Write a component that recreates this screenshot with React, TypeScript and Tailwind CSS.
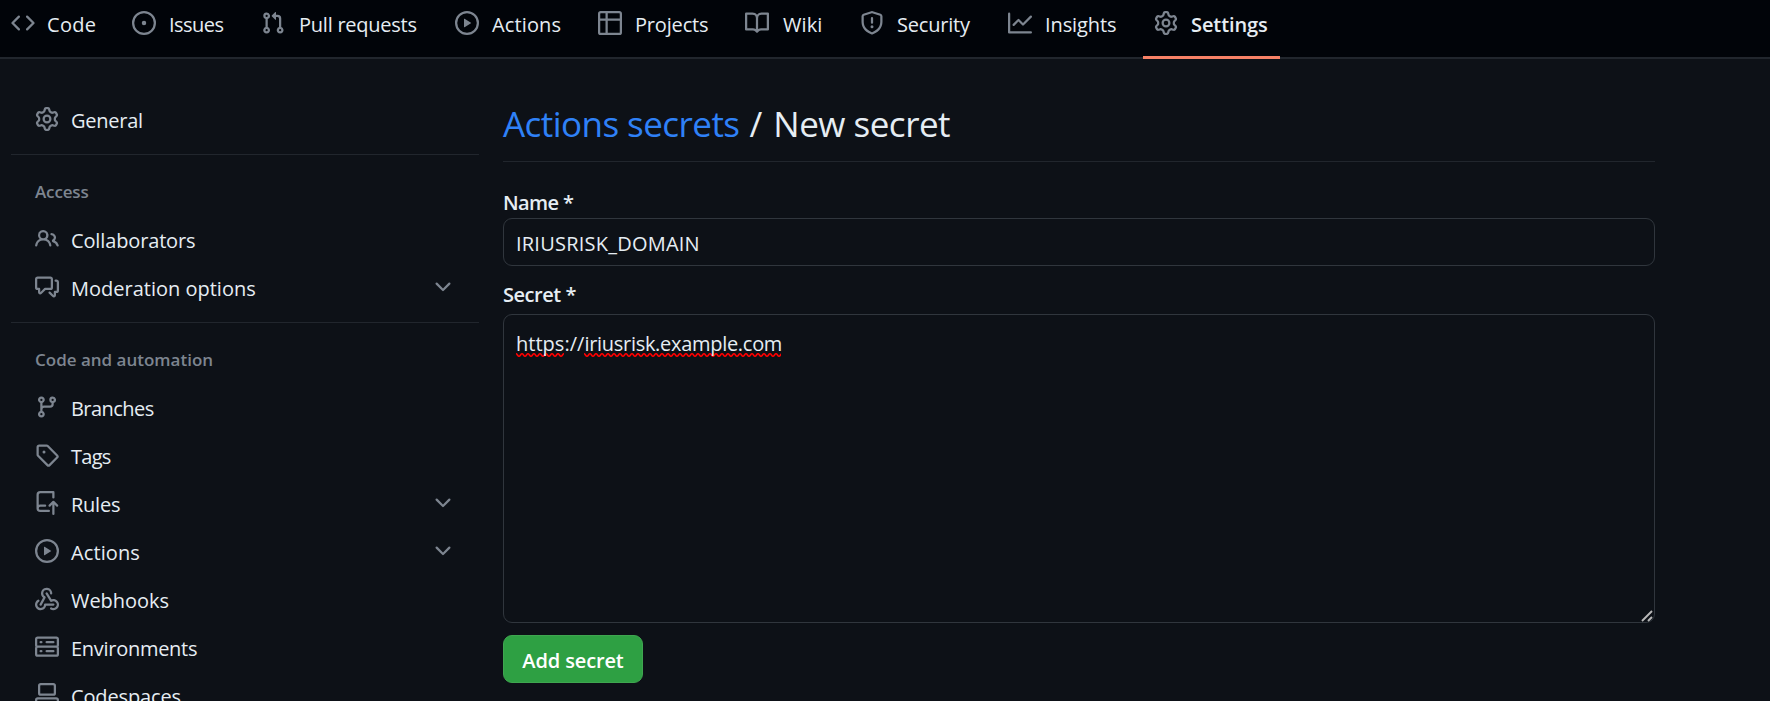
import React from "react";

const icons = {
  code: "m11.28 3.22 4.25 4.25a.75.75 0 0 1 0 1.06l-4.25 4.25a.749.749 0 0 1-1.275-.326.749.749 0 0 1 .215-.734L13.94 8l-3.72-3.72a.749.749 0 0 1 .326-1.275.749.749 0 0 1 .734.215Zm-6.56 0a.751.751 0 0 1 1.042.018.751.751 0 0 1 .018 1.042L2.06 8l3.72 3.72a.749.749 0 0 1-.326 1.275.749.749 0 0 1-.734-.215L.47 8.53a.75.75 0 0 1 0-1.06Z",
  issue: "M8 9.5a1.5 1.5 0 1 0 0-3 1.5 1.5 0 0 0 0 3Z M8 0a8 8 0 1 1 0 16A8 8 0 0 1 8 0ZM1.5 8a6.5 6.5 0 1 0 13 0 6.5 6.5 0 0 0-13 0Z",
  pull: "M1.5 3.25a2.25 2.25 0 1 1 3 2.122v5.256a2.251 2.251 0 1 1-1.5 0V5.372A2.25 2.25 0 0 1 1.5 3.25Zm5.677-.177L9.573.677A.25.25 0 0 1 10 .854V2.5h1A2.5 2.5 0 0 1 13.5 5v5.628a2.251 2.251 0 1 1-1.5 0V5a1 1 0 0 0-1-1h-1v1.646a.25.25 0 0 1-.427.177L7.177 3.427a.25.25 0 0 1 0-.354ZM3.75 2.5a.75.75 0 1 0 0 1.5.75.75 0 0 0 0-1.5Zm0 9.5a.75.75 0 1 0 0 1.5.75.75 0 0 0 0-1.5Zm8.25.75a.75.75 0 1 0 1.5 0 .75.75 0 0 0-1.5 0Z",
  play: "M8 0a8 8 0 1 1 0 16A8 8 0 0 1 8 0ZM1.5 8a6.5 6.5 0 1 0 13 0 6.5 6.5 0 0 0-13 0Zm4.879-2.773 4.264 2.559a.25.25 0 0 1 0 .428l-4.264 2.559A.25.25 0 0 1 6 10.559V5.442a.25.25 0 0 1 .379-.215Z",
  table: "M0 1.75C0 .784.784 0 1.75 0h12.5C15.216 0 16 .784 16 1.75v12.5A1.75 1.75 0 0 1 14.25 16H1.75A1.75 1.75 0 0 1 0 14.25ZM6.5 6.5v8h7.75a.25.25 0 0 0 .25-.25V6.5Zm8-1.5V1.75a.25.25 0 0 0-.25-.25H6.5V5Zm-13 1.5v7.75c0 .138.112.25.25.25H5v-8ZM5 5V1.5H1.75a.25.25 0 0 0-.25.25V5Z",
  book: "M0 1.75A.75.75 0 0 1 .75 1h4.253c1.227 0 2.317.59 3 1.501A3.743 3.743 0 0 1 11.006 1h4.245a.75.75 0 0 1 .75.75v10.5a.75.75 0 0 1-.75.75h-4.507a2.25 2.25 0 0 0-1.591.659l-.622.621a.75.75 0 0 1-1.06 0l-.622-.621A2.25 2.25 0 0 0 5.258 13H.75a.75.75 0 0 1-.75-.75Zm7.251 10.324.004-5.073-.002-2.253A2.25 2.25 0 0 0 5.003 2.5H1.5v9h3.757a3.75 3.75 0 0 1 1.994.574ZM8.755 4.75l-.004 7.322a3.752 3.752 0 0 1 1.992-.572H14.5v-9h-3.495a2.25 2.25 0 0 0-2.25 2.25Z",
  shield: "M7.467.133a1.748 1.748 0 0 1 1.066 0l5.25 1.68A1.75 1.75 0 0 1 15 3.48V7c0 1.566-.32 3.182-1.303 4.682-.983 1.498-2.585 2.813-5.032 3.855a1.697 1.697 0 0 1-1.33 0c-2.447-1.042-4.049-2.357-5.032-3.855C1.32 10.182 1 8.566 1 7V3.48a1.75 1.75 0 0 1 1.217-1.667Zm.61 1.429a.25.25 0 0 0-.153 0l-5.25 1.68a.25.25 0 0 0-.174.238V7c0 1.358.275 2.666 1.057 3.86.784 1.194 2.121 2.34 4.366 3.297a.196.196 0 0 0 .154 0c2.245-.956 3.582-2.104 4.366-3.298C13.225 9.666 13.5 8.36 13.5 7V3.48a.251.251 0 0 0-.174-.237l-5.25-1.68ZM8.75 4.75v3a.75.75 0 0 1-1.5 0v-3a.75.75 0 0 1 1.5 0ZM9 10.5a1 1 0 1 1-2 0 1 1 0 0 1 2 0Z",
  graph: "M1.5 1.75V13.5h13.75a.75.75 0 0 1 0 1.5H.75a.75.75 0 0 1-.75-.75V1.75a.75.75 0 0 1 1.5 0Zm14.28 2.53-5.25 5.25a.75.75 0 0 1-1.06 0L7 7.06 4.28 9.78a.751.751 0 0 1-1.042-.018.751.751 0 0 1-.018-1.042l3.25-3.25a.75.75 0 0 1 1.06 0L10 7.94l4.72-4.72a.751.751 0 0 1 1.042.018.751.751 0 0 1 .018 1.042Z",
  gear: "M8 0a8.2 8.2 0 0 1 .701.031C9.444.095 9.99.645 10.16 1.29l.288 1.107c.018.066.079.158.212.224.231.114.454.243.668.386.123.082.233.09.299.071l1.103-.303c.644-.176 1.392.021 1.82.63.27.385.506.792.704 1.218.315.675.111 1.422-.364 1.891l-.814.806c-.049.048-.098.147-.088.294.016.257.016.515 0 .772-.01.147.038.246.088.294l.814.806c.475.469.679 1.216.364 1.891a7.977 7.977 0 0 1-.704 1.217c-.428.61-1.176.807-1.82.63l-1.102-.302c-.067-.019-.177-.011-.3.071a5.909 5.909 0 0 1-.668.386c-.133.066-.194.158-.211.224l-.29 1.106c-.168.646-.715 1.196-1.458 1.26a8.006 8.006 0 0 1-1.402 0c-.743-.064-1.289-.614-1.458-1.26l-.289-1.106c-.018-.066-.079-.158-.212-.224a5.738 5.738 0 0 1-.668-.386c-.123-.082-.233-.09-.299-.071l-1.103.303c-.644.176-1.392-.021-1.82-.63a8.12 8.12 0 0 1-.704-1.218c-.315-.675-.111-1.422.363-1.891l.815-.806c.05-.048.098-.147.088-.294a6.214 6.214 0 0 1 0-.772c.01-.147-.038-.246-.088-.294l-.815-.806C.635 6.045.431 5.298.746 4.623a7.92 7.92 0 0 1 .704-1.217c.428-.61 1.176-.807 1.82-.63l1.102.302c.067.019.177.011.3-.071.214-.143.437-.272.668-.386.133-.066.194-.158.211-.224l.29-1.106C6.009.645 6.556.095 7.299.03 7.53.01 7.764 0 8 0Zm-.571 1.525c-.036.003-.108.036-.137.146l-.289 1.105c-.147.561-.549.967-.998 1.189-.173.086-.34.183-.5.29-.417.278-.97.423-1.529.27l-1.103-.303c-.109-.03-.175.016-.195.045-.22.312-.412.644-.573.99-.014.031-.021.11.059.19l.815.806c.411.406.562.957.53 1.456a4.709 4.709 0 0 0 0 .582c.032.499-.119 1.05-.53 1.456l-.815.806c-.081.08-.073.159-.059.19.162.346.353.677.573.989.02.03.085.076.195.046l1.102-.303c.56-.153 1.113-.008 1.53.27.161.107.328.204.501.29.447.222.85.629.997 1.189l.289 1.105c.029.109.101.143.137.146a6.6 6.6 0 0 0 1.142 0c.036-.003.108-.036.137-.146l.289-1.105c.147-.561.549-.967.998-1.189.173-.086.34-.183.5-.29.417-.278.97-.423 1.529-.27l1.103.303c.109.029.175-.016.195-.045.22-.313.411-.644.573-.99.014-.031.021-.11-.059-.19l-.815-.806c-.411-.406-.562-.957-.53-1.456a4.709 4.709 0 0 0 0-.582c-.032-.499.119-1.05.53-1.456l.815-.806c.081-.08.073-.159.059-.19a6.464 6.464 0 0 0-.573-.989c-.02-.03-.085-.076-.195-.046l-1.102.303c-.56.153-1.113.008-1.53-.27a4.44 4.44 0 0 0-.501-.29c-.447-.222-.85-.629-.997-1.189l-.289-1.105c-.029-.11-.101-.143-.137-.146a6.6 6.6 0 0 0-1.142 0ZM11 8a3 3 0 1 1-6 0 3 3 0 0 1 6 0ZM9.5 8a1.5 1.5 0 1 0-3.001.001A1.5 1.5 0 0 0 9.5 8Z",
  people: "M2 5.5a3.5 3.5 0 1 1 5.898 2.549 5.508 5.508 0 0 1 3.034 4.084.75.75 0 1 1-1.482.235 4 4 0 0 0-7.9 0 .75.75 0 0 1-1.482-.236A5.507 5.507 0 0 1 3.102 8.05 3.493 3.493 0 0 1 2 5.5ZM11 4a3.001 3.001 0 0 1 2.22 5.018 5.01 5.01 0 0 1 2.56 3.012.749.749 0 0 1-.885.954.752.752 0 0 1-.549-.514 3.507 3.507 0 0 0-2.522-2.372.75.75 0 0 1-.574-.73v-.352a.75.75 0 0 1 .416-.672A1.5 1.5 0 0 0 11 5.5.75.75 0 0 1 11 4Zm-5.5-.5a2 2 0 1 0-.001 3.999A2 2 0 0 0 5.5 3.5Z",
  comments: "M1.75 1h8.5c.966 0 1.75.784 1.75 1.75v5.5A1.75 1.75 0 0 1 10.25 10H7.061l-2.574 2.573A1.458 1.458 0 0 1 2 11.543V10h-.25A1.75 1.75 0 0 1 0 8.25v-5.5C0 1.784.784 1 1.75 1ZM1.5 2.75v5.5c0 .138.112.25.25.25h1a.75.75 0 0 1 .75.75v2.19l2.72-2.72a.749.749 0 0 1 .53-.22h3.5a.25.25 0 0 0 .25-.25v-5.5a.25.25 0 0 0-.25-.25h-8.5a.25.25 0 0 0-.25.25Zm13 2a.25.25 0 0 0-.25-.25h-.5a.75.75 0 0 1 0-1.5h.5c.966 0 1.75.784 1.75 1.75v5.5A1.75 1.75 0 0 1 14.25 12H14v1.543a1.458 1.458 0 0 1-2.487 1.03L9.22 12.28a.749.749 0 0 1 .326-1.275.749.749 0 0 1 .734.215l2.22 2.22v-2.19a.75.75 0 0 1 .75-.75h1a.25.25 0 0 0 .25-.25Z",
  branch: "M9.5 3.25a2.25 2.25 0 1 1 3 2.122V6A2.5 2.5 0 0 1 10 8.5H6a1 1 0 0 0-1 1v1.128a2.251 2.251 0 1 1-1.5 0V5.372a2.25 2.25 0 1 1 1.5 0v1.836A2.493 2.493 0 0 1 6 7h4a1 1 0 0 0 1-1v-.628A2.25 2.25 0 0 1 9.5 3.25Zm-6 0a.75.75 0 1 0 1.5 0 .75.75 0 0 0-1.5 0Zm8.25-.75a.75.75 0 1 0 0 1.5.75.75 0 0 0 0-1.5ZM4.25 12a.75.75 0 1 0 0 1.5.75.75 0 0 0 0-1.5Z",
  tag: "M1 7.775V2.75C1 1.784 1.784 1 2.75 1h5.025c.464 0 .91.184 1.238.513l6.25 6.25a1.75 1.75 0 0 1 0 2.474l-5.026 5.026a1.75 1.75 0 0 1-2.474 0l-6.25-6.25A1.752 1.752 0 0 1 1 7.775Zm1.5 0c0 .066.026.13.073.177l6.25 6.25a.25.25 0 0 0 .354 0l5.025-5.025a.25.25 0 0 0 0-.354l-6.25-6.25a.25.25 0 0 0-.177-.073H2.75a.25.25 0 0 0-.25.25ZM6 5a1 1 0 1 1 0 2 1 1 0 0 1 0-2Z",
  push: "M1 2.5A2.5 2.5 0 0 1 3.5 0h8.75a.75.75 0 0 1 .75.75v3.5a.75.75 0 0 1-1.5 0V1.5h-8a1 1 0 0 0-1 1v6.708A2.493 2.493 0 0 1 3.5 9h3.25a.75.75 0 0 1 0 1.5H3.5a1 1 0 0 0 0 2h5.75a.75.75 0 0 1 0 1.5H3.5A2.5 2.5 0 0 1 1 11.5Zm13.23 7.79h-.001l-1.224-1.224v6.184a.75.75 0 0 1-1.5 0V9.066L10.28 10.29a.75.75 0 0 1-1.06-1.061l2.505-2.504a.75.75 0 0 1 1.06 0L15.29 9.23a.751.751 0 0 1-.018 1.042.751.751 0 0 1-1.042.018Z",
  webhook: "M5.5 4.25a2.25 2.25 0 0 1 4.5 0 .75.75 0 0 0 1.5 0 3.75 3.75 0 1 0-6.14 2.889l-2.272 4.258a.75.75 0 0 0 1.324.706L7 7.25a.75.75 0 0 0-.309-1.015A2.25 2.25 0 0 1 5.5 4.25Z M7.364 3.607a.75.75 0 0 1 1.03.257l2.608 4.349a3.75 3.75 0 1 1-.628 6.785.75.75 0 0 1 .752-1.299 2.25 2.25 0 1 0-.033-3.88.75.75 0 0 1-1.03-.256L7.107 4.636a.75.75 0 0 1 .257-1.03Z M2.9 8.776A.75.75 0 0 1 2.625 9.8 2.25 2.25 0 1 0 6 11.75a.75.75 0 0 1 .75-.751h5.5a.75.75 0 0 1 0 1.5H7.425a3.751 3.751 0 1 1-5.55-3.998.75.75 0 0 1 1.024.274Z",
  server: "M1.75 1h12.5c.966 0 1.75.784 1.75 1.75v4c0 .372-.116.717-.314 1 .198.283.314.628.314 1v4a1.75 1.75 0 0 1-1.75 1.75H1.75A1.75 1.75 0 0 1 0 12.75v-4c0-.358.109-.707.314-1a1.739 1.739 0 0 1-.314-1v-4C0 1.784.784 1 1.75 1ZM1.5 2.75v4c0 .138.112.25.25.25h12.5a.25.25 0 0 0 .25-.25v-4a.25.25 0 0 0-.25-.25H1.75a.25.25 0 0 0-.25.25Zm.25 5.75a.25.25 0 0 0-.25.25v4c0 .138.112.25.25.25h12.5a.25.25 0 0 0 .25-.25v-4a.25.25 0 0 0-.25-.25ZM7 4.75A.75.75 0 0 1 7.75 4h4.5a.75.75 0 0 1 0 1.5h-4.5A.75.75 0 0 1 7 4.75ZM7.75 10h4.5a.75.75 0 0 1 0 1.5h-4.5a.75.75 0 0 1 0-1.5ZM3 4.75A.75.75 0 0 1 3.75 4h.5a.75.75 0 0 1 0 1.5h-.5A.75.75 0 0 1 3 4.75ZM3.75 10h.5a.75.75 0 0 1 0 1.5h-.5a.75.75 0 0 1 0-1.5Z",
  codespaces: "M0 11.25c0-.966.784-1.75 1.75-1.75h12.5c.966 0 1.75.784 1.75 1.75v3A1.75 1.75 0 0 1 14.25 16H1.75A1.75 1.75 0 0 1 0 14.25Zm2-9.5C2 .784 2.784 0 3.75 0h8.5C13.216 0 14 .784 14 1.75v5a1.75 1.75 0 0 1-1.75 1.75h-8.5A1.75 1.75 0 0 1 2 6.75Zm1.75-.25a.25.25 0 0 0-.25.25v5c0 .138.112.25.25.25h8.5a.25.25 0 0 0 .25-.25v-5a.25.25 0 0 0-.25-.25Zm-2 9.5a.25.25 0 0 0-.25.25v3c0 .138.112.25.25.25h12.5a.25.25 0 0 0 .25-.25v-3a.25.25 0 0 0-.25-.25Z",
  chevron: "M12.78 5.22a.749.749 0 0 1 0 1.06l-4.25 4.25a.749.749 0 0 1-1.06 0L3.22 6.28a.749.749 0 1 1 1.06-1.06L8 8.939l3.72-3.719a.749.749 0 0 1 1.06 0Z",
};

type IconName = keyof typeof icons;

function Icon({ name }: { name: IconName }) {
  return (
    <svg viewBox="0 0 16 16" className="size-6 shrink-0 fill-[#7d8590]" aria-hidden="true">
      <path d={icons[name]} />
    </svg>
  );
}

type Item = { icon: IconName; label: string; text: string; expandable?: boolean };

const tabs: Item[] = [
  { icon: "code", label: "Code", text: "w-[49px] tracking-[0.3px]" },
  { icon: "issue", label: "Issues", text: "w-[57px] pl-px tracking-[-0.55px]" },
  { icon: "pull", label: "Pull requests", text: "w-[122px] pl-0.5 tracking-[-0.24px]" },
  { icon: "play", label: "Actions", text: "w-[71px] pl-px tracking-[0.13px]" },
  { icon: "table", label: "Projects", text: "w-[75px] pl-px tracking-[-0.17px]" },
  { icon: "book", label: "Wiki", text: "w-[43px] pl-0.5 tracking-[0.1px]" },
  { icon: "shield", label: "Security", text: "w-[76px] pl-px tracking-[-0.2px]" },
  { icon: "graph", label: "Insights", text: "w-[74px] pl-px tracking-[-0.1px]" },
  { icon: "gear", label: "Settings", text: "w-[78px] pl-px tracking-[-0.1px] font-semibold" },
];

const access: Item[] = [
  { icon: "people", label: "Collaborators", text: "tracking-[-0.14px]" },
  { icon: "comments", label: "Moderation options", text: "", expandable: true },
];

const automation: Item[] = [
  { icon: "branch", label: "Branches", text: "tracking-[-0.55px]" },
  { icon: "tag", label: "Tags", text: "tracking-[-0.75px]" },
  { icon: "push", label: "Rules", text: "tracking-[-0.25px]", expandable: true },
  { icon: "play", label: "Actions", text: "tracking-[0.1px]", expandable: true },
  { icon: "webhook", label: "Webhooks", text: "tracking-[-0.05px]" },
  { icon: "server", label: "Environments", text: "tracking-[-0.28px]" },
  { icon: "codespaces", label: "Codespaces", text: "tracking-[-0.14px]" },
];

function MenuRow({ item }: { item: Item }) {
  return (
    <a className="flex h-12 shrink-0 items-center gap-3 px-6">
      <Icon name={item.icon} />
      <span className={`grow pt-1 ${item.text}`}>{item.label}</span>
      {item.expandable && <Icon name="chevron" />}
    </a>
  );
}

function MenuSection({ title, tracking, items }: { title: string; tracking: string; items: Item[] }) {
  return (
    <section className="mt-[11px] border-t border-[#21262d]">
      <h3 className={`h-15 px-6 pt-[25px] text-[17px] leading-6 font-semibold text-[#7d8590] ${tracking}`}>{title}</h3>
      {items.map((item) => (
        <MenuRow key={item.label} item={item} />
      ))}
    </section>
  );
}

function Squiggle({ className }: { className: string }) {
  return (
    <svg className={`absolute top-[24px] h-1 ${className}`} aria-hidden="true">
      <defs>
        <pattern id="wave" width="6" height="4" patternUnits="userSpaceOnUse">
          <path d="M-1.5 2 Q0 -0.5 1.5 2 T4.5 2 T7.5 2" fill="none" stroke="#ff0000" strokeWidth="1.6" />
        </pattern>
      </defs>
      <rect width="100%" height="4" fill="url(#wave)" />
    </svg>
  );
}

export default function App() {
  return (
    <div className="flex h-[701px] flex-col overflow-hidden bg-[#0d1117] font-['Open_Sans',sans-serif] text-[20px] leading-[30px] text-[#e6edf3]">
      <nav className="flex h-[59px] shrink-0 gap-3 border-b-2 border-[#21262d] bg-[#010409]">
        {tabs.map((tab, i) => (
          <a
            key={tab.label}
            className={`flex h-[59px] shrink-0 items-start gap-3 pt-[11px] pr-3 ${
              i === 0 ? "pl-[11px]" : tab.label === "Settings" ? "ml-px border-b-3 border-[#f78166] pl-[11px]" : "pl-3"
            }`}
          >
            <Icon name={tab.icon} />
            <span className={`-mt-px whitespace-nowrap ${tab.text}`}>{tab.label}</span>
          </a>
        ))}
      </nav>
      <div className="flex min-h-0 grow">
        <aside className="ml-[11px] w-[468px] shrink-0 pt-9">
          <MenuRow item={{ icon: "gear", label: "General", text: "tracking-[-0.26px]" }} />
          <MenuSection title="Access" tracking="tracking-[-0.14px]" items={access} />
          <MenuSection title="Code and automation" tracking="" items={automation} />
        </aside>
        <main className="ml-6 w-[1152px] shrink-0 pt-10">
          <h1 className="flex h-[63px] border-b border-[#21262d] pt-px text-[35px] leading-[48px] whitespace-nowrap">
            <a className="tracking-[-0.55px] text-[#2f81f7]">Actions secrets</a>
            <span className="ml-2.5">/</span>
            <span className="ml-[11px] tracking-[-0.5px]">New secret</span>
          </h1>
          <label className="mt-[26px] block font-semibold tracking-[-0.6px] word-spacing-[1px]">Name *</label>
          <div className="flex h-12 items-center rounded-[9px] border border-[#30363d] px-3 pt-[3px] tracking-[0.22px]">
            IRIUSRISK_DOMAIN
          </div>
          <label className="mt-[14px] block font-semibold tracking-[-0.45px]">Secret *</label>
          <div className="relative mt-1 h-[309px] rounded-[9px] border border-[#30363d] px-3 pt-[14px]">
            <div className="relative w-max tracking-[-0.29px]">
              <Squiggle className="left-0 w-[48px]" />
              <Squiggle className="left-[68px] w-[197px]" />
              <span className="relative">
                <span className="tracking-[0.02px]">https://</span>iriusrisk.example.com
              </span>
            </div>
            <svg viewBox="0 0 12 12" className="absolute right-px bottom-0 size-3" aria-hidden="true">
              <path d="M1 11 11 1M7 11 11 7" stroke="#b8b8b8" strokeWidth="1.9" />
            </svg>
          </div>
          <button className="mt-3 flex h-12 w-[140px] items-center justify-center rounded-[9px] border border-[#3fa650] bg-[#2ea043] pt-1 font-semibold tracking-[-0.13px] text-white">
            Add secret
          </button>
        </main>
      </div>
    </div>
  );
}
